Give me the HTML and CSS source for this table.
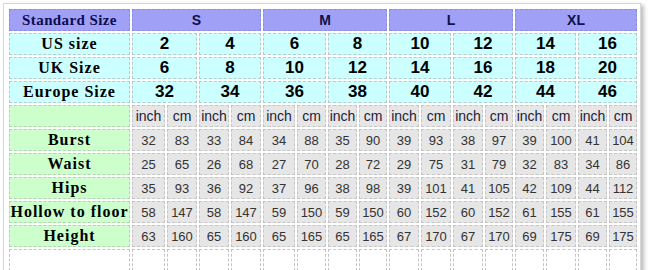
FILE: index.html
```html
<!DOCTYPE html>
<html>
<head>
<meta charset="utf-8">
<link rel="stylesheet" href="styles.css">
</head>
<body>
<div class="frame">
  <div class="chart">
    <div class="c hd lbl">Standard Size</div>
    <div class="c hd sz s4">S</div>
    <div class="c hd sz s4">M</div>
    <div class="c hd sz s4">L</div>
    <div class="c hd sz s4">XL</div>

    <div class="c cy lbl">US size</div>
    <div class="c cy big s2">2</div><div class="c cy big s2">4</div>
    <div class="c cy big s2">6</div><div class="c cy big s2">8</div>
    <div class="c cy big s2">10</div><div class="c cy big s2">12</div>
    <div class="c cy big s2">14</div><div class="c cy big s2">16</div>

    <div class="c cy lbl">UK Size</div>
    <div class="c cy big s2">6</div><div class="c cy big s2">8</div>
    <div class="c cy big s2">10</div><div class="c cy big s2">12</div>
    <div class="c cy big s2">14</div><div class="c cy big s2">16</div>
    <div class="c cy big s2">18</div><div class="c cy big s2">20</div>

    <div class="c cy lbl">Europe Size</div>
    <div class="c cy big s2">32</div><div class="c cy big s2">34</div>
    <div class="c cy big s2">36</div><div class="c cy big s2">38</div>
    <div class="c cy big s2">40</div><div class="c cy big s2">42</div>
    <div class="c cy big s2">44</div><div class="c cy big s2">46</div>

    <div class="c gr lbl"></div>
    <div class="c gy unit">inch</div><div class="c gy unit">cm</div><div class="c gy unit">inch</div><div class="c gy unit">cm</div>
    <div class="c gy unit">inch</div><div class="c gy unit">cm</div><div class="c gy unit">inch</div><div class="c gy unit">cm</div>
    <div class="c gy unit">inch</div><div class="c gy unit">cm</div><div class="c gy unit">inch</div><div class="c gy unit">cm</div>
    <div class="c gy unit">inch</div><div class="c gy unit">cm</div><div class="c gy unit">inch</div><div class="c gy unit">cm</div>

    <div class="c gr lbl">Burst</div>
    <div class="c gy num">32</div><div class="c gy num">83</div><div class="c gy num">33</div><div class="c gy num">84</div>
    <div class="c gy num">34</div><div class="c gy num">88</div><div class="c gy num">35</div><div class="c gy num">90</div>
    <div class="c gy num">39</div><div class="c gy num">93</div><div class="c gy num">38</div><div class="c gy num">97</div>
    <div class="c gy num">39</div><div class="c gy num">100</div><div class="c gy num">41</div><div class="c gy num">104</div>

    <div class="c gr lbl">Waist</div>
    <div class="c gy num">25</div><div class="c gy num">65</div><div class="c gy num">26</div><div class="c gy num">68</div>
    <div class="c gy num">27</div><div class="c gy num">70</div><div class="c gy num">28</div><div class="c gy num">72</div>
    <div class="c gy num">29</div><div class="c gy num">75</div><div class="c gy num">31</div><div class="c gy num">79</div>
    <div class="c gy num">32</div><div class="c gy num">83</div><div class="c gy num">34</div><div class="c gy num">86</div>

    <div class="c gr lbl">Hips</div>
    <div class="c gy num">35</div><div class="c gy num">93</div><div class="c gy num">36</div><div class="c gy num">92</div>
    <div class="c gy num">37</div><div class="c gy num">96</div><div class="c gy num">38</div><div class="c gy num">98</div>
    <div class="c gy num">39</div><div class="c gy num">101</div><div class="c gy num">41</div><div class="c gy num">105</div>
    <div class="c gy num">42</div><div class="c gy num">109</div><div class="c gy num">44</div><div class="c gy num">112</div>

    <div class="c gr lbl">Hollow to floor</div>
    <div class="c gy num">58</div><div class="c gy num">147</div><div class="c gy num">58</div><div class="c gy num">147</div>
    <div class="c gy num">59</div><div class="c gy num">150</div><div class="c gy num">59</div><div class="c gy num">150</div>
    <div class="c gy num">60</div><div class="c gy num">152</div><div class="c gy num">60</div><div class="c gy num">152</div>
    <div class="c gy num">61</div><div class="c gy num">155</div><div class="c gy num">61</div><div class="c gy num">155</div>

    <div class="c gr lbl">Height</div>
    <div class="c gy num">63</div><div class="c gy num">160</div><div class="c gy num">65</div><div class="c gy num">160</div>
    <div class="c gy num">65</div><div class="c gy num">165</div><div class="c gy num">65</div><div class="c gy num">165</div>
    <div class="c gy num">67</div><div class="c gy num">170</div><div class="c gy num">67</div><div class="c gy num">170</div>
    <div class="c gy num">69</div><div class="c gy num">175</div><div class="c gy num">69</div><div class="c gy num">175</div>

    <div class="c wh"></div>
    <div class="c wh"></div><div class="c wh"></div><div class="c wh"></div><div class="c wh"></div>
    <div class="c wh"></div><div class="c wh"></div><div class="c wh"></div><div class="c wh"></div>
    <div class="c wh"></div><div class="c wh"></div><div class="c wh"></div><div class="c wh"></div>
    <div class="c wh"></div><div class="c wh"></div><div class="c wh"></div><div class="c wh"></div>
  </div>
</div>
</body>
</html>
```
FILE: styles.css
```css
html, body {
  margin: 0;
  padding: 0;
  background: #ffffff;
}

.frame {
  display: inline-block;
  margin: 3px 0 0 3px;
  padding: 5px 3px 5px 5px;
  border: 1px solid #d6d6d6;
  box-shadow: 3px 2px 4px rgba(0, 0, 0, 0.25);
  background: #ffffff;
}

.chart {
  display: grid;
  grid-template-columns: 121px 33px 30px 30px 30px 32px 29px 29px 28px 30px 30px 30px 28px 29px 30px 29px 28px;
  grid-auto-rows: 22px;
  gap: 2px;
}

.c {
  box-sizing: border-box;
  border: 1px dashed #c2c2c2;
  display: flex;
  align-items: center;
  justify-content: center;
  white-space: nowrap;
  overflow: hidden;
}

.s2 { grid-column: span 2; }
.s4 { grid-column: span 4; }

.hd {
  background: #a0a0f6;
  border-color: #8c8ce4;
}

.cy {
  background: #ccffff;
  border-color: #b6cccc;
}

.gr {
  background: #ccffcc;
  border-color: #b4d4b4;
}

.gy {
  background: #e6e6e6;
  border-color: #c6c6c6;
}

.wh {
  background: #ffffff;
  border-color: #c4c4c4;
}

.lbl {
  font-family: "Liberation Serif", "Times New Roman", serif;
  font-weight: bold;
  font-size: 16px;
  letter-spacing: 1px;
  color: #000000;
}

.hd.lbl {
  font-size: 15px;
  letter-spacing: 0.4px;
  color: #0c0c50;
}

.sz {
  font-family: "Liberation Sans", Arial, sans-serif;
  font-weight: bold;
  font-size: 14px;
  color: #10104a;
}

.big {
  font-family: "Liberation Sans", Arial, sans-serif;
  font-weight: bold;
  font-size: 17px;
  color: #000000;
}

.unit {
  font-family: "Liberation Sans", Arial, sans-serif;
  font-size: 14px;
  color: #1c1c3c;
}

.num {
  font-family: "Liberation Sans", Arial, sans-serif;
  font-size: 13px;
  color: #333333;
}
```
